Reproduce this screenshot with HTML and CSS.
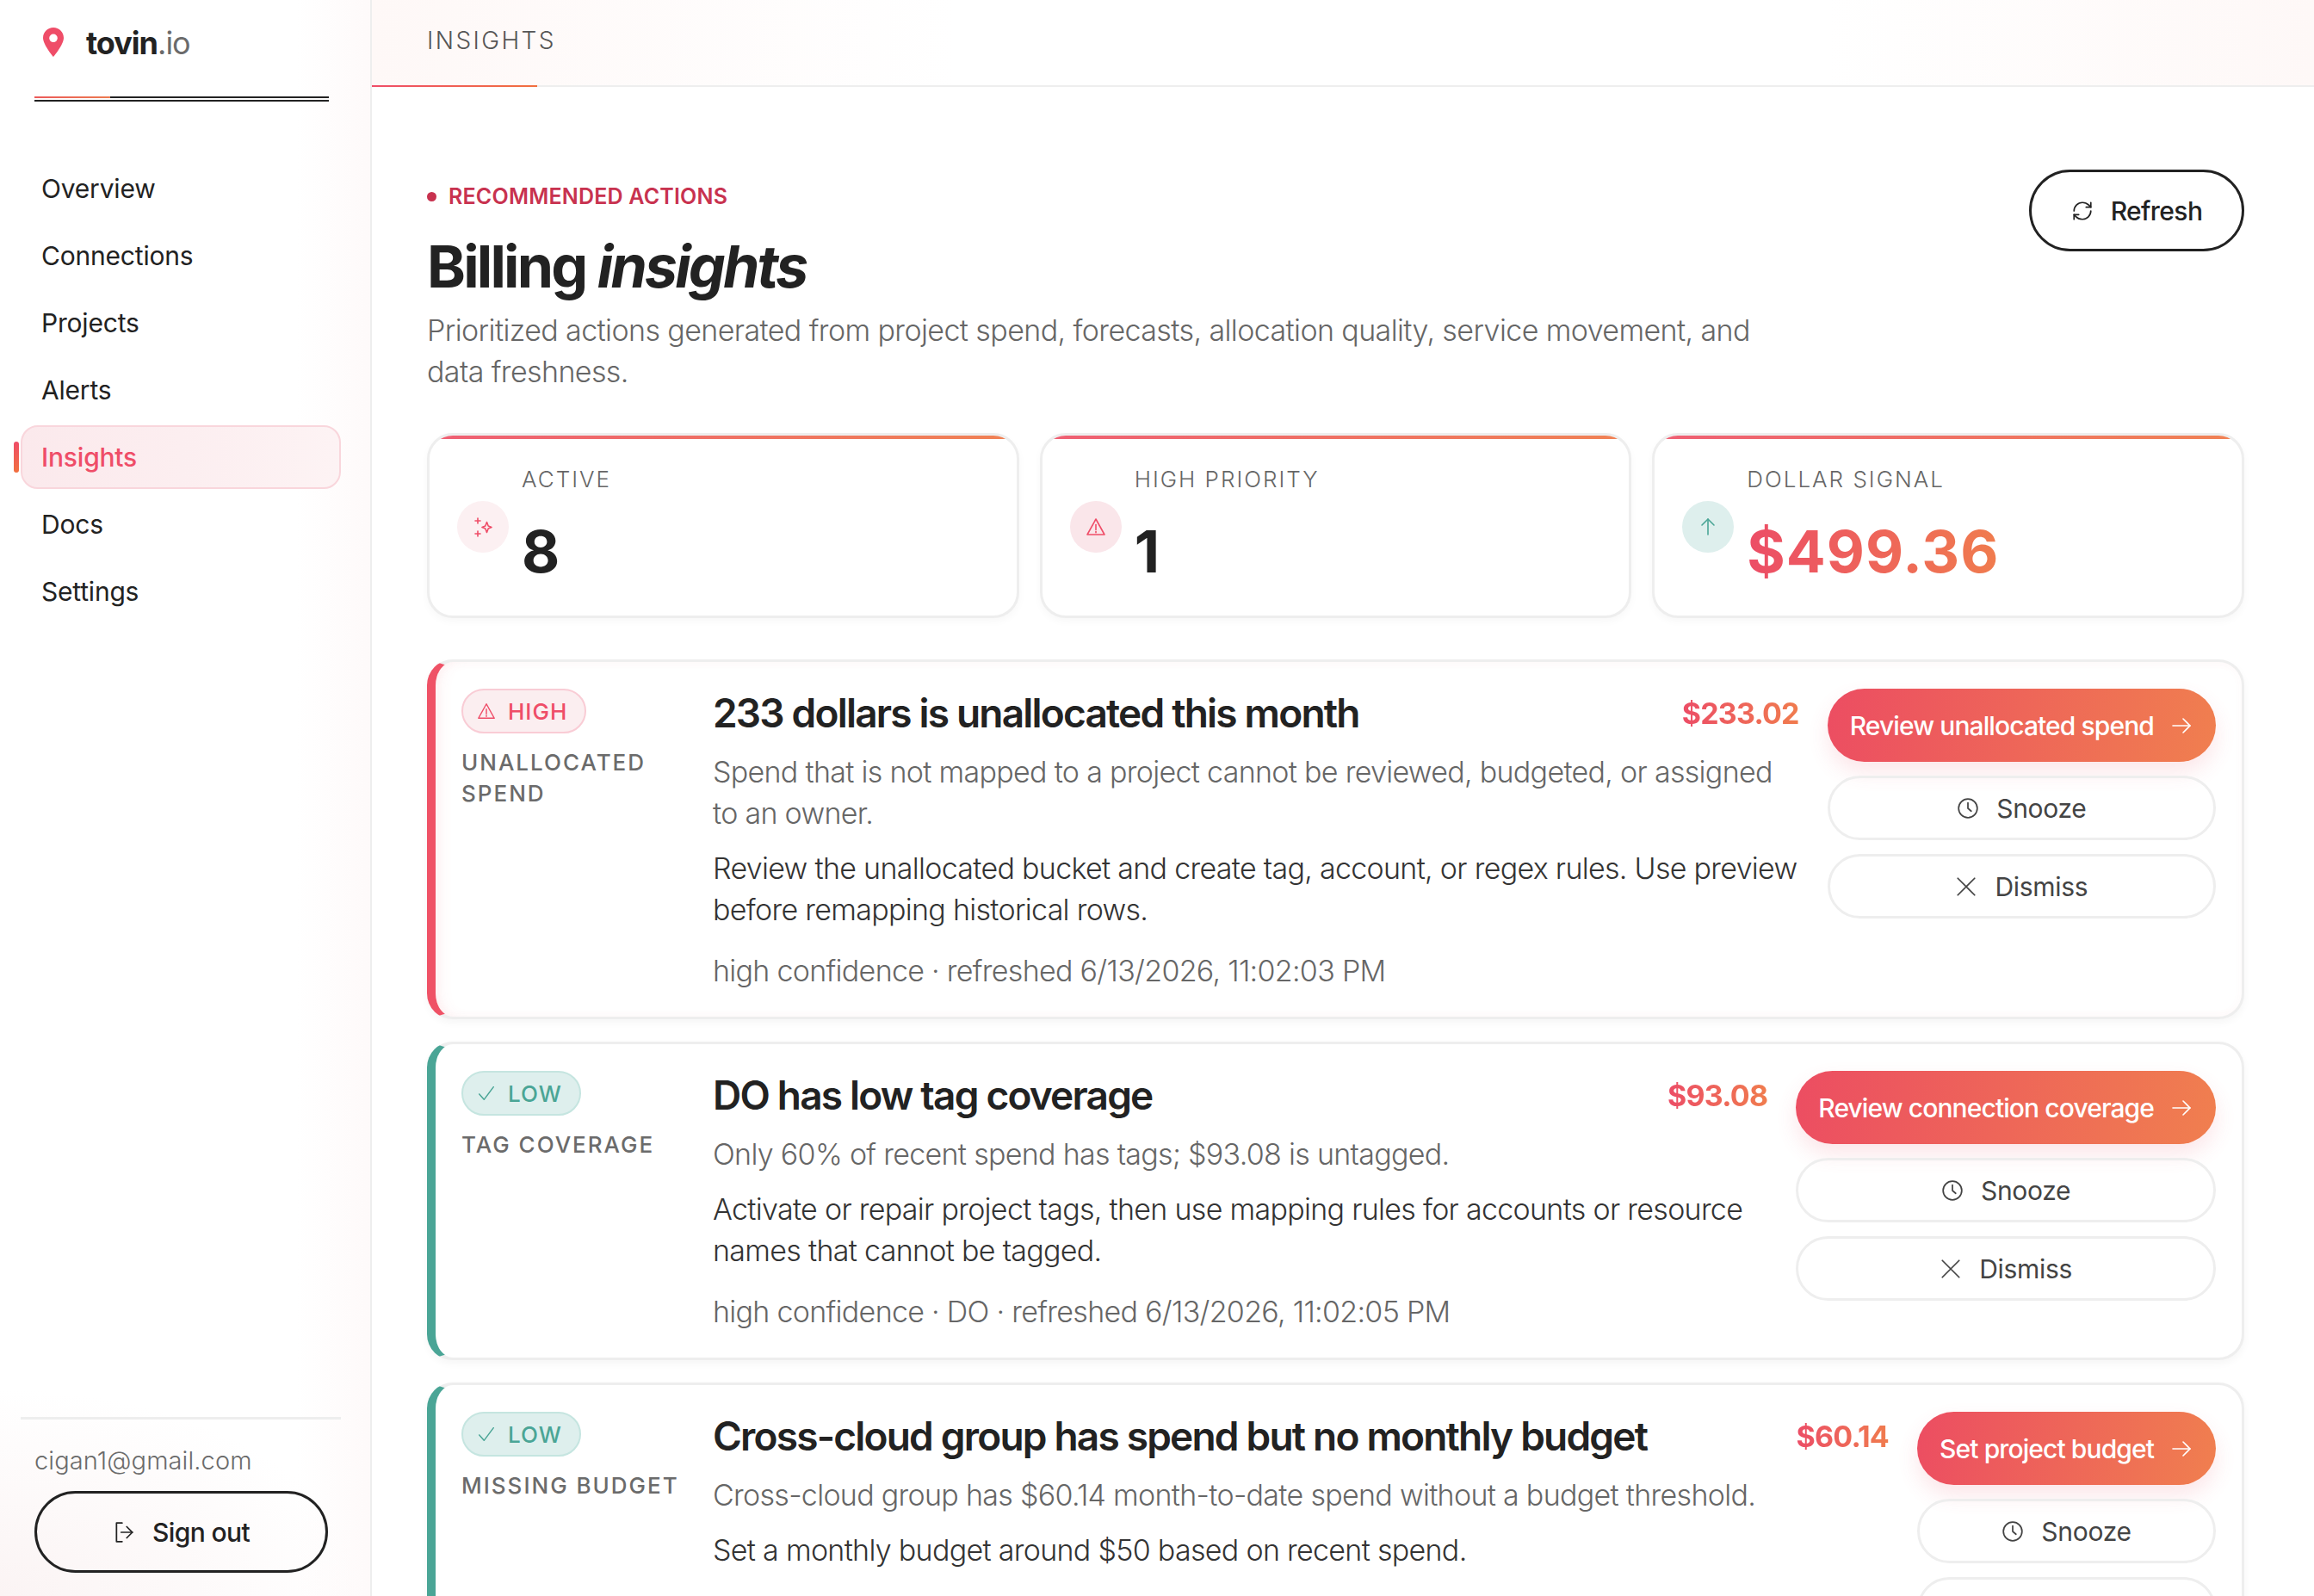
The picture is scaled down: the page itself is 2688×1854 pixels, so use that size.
FILE: index.html
```html
<!DOCTYPE html>
<html lang="en">
<head>
  <meta charset="UTF-8"/>
  <title>Billing insights</title>
  <link rel="stylesheet" href="styles.css">
</head>
<body>

  <!-- Icon sprite -->
  <svg class="sprite" xmlns="http://www.w3.org/2000/svg">
    <symbol id="i-alert" viewBox="0 0 24 24"><path d="M12 3 22 21H2Z"/><path d="M12 9.5v6"/><path d="M12 17.5v1.2"/></symbol>
    <symbol id="i-check" viewBox="0 0 24 24"><path d="m3 13 6 7L21 4"/></symbol>
    <symbol id="i-spark" viewBox="0 0 24 24"><path d="M16.5 6.5 18.2 11l3.8 1.5-3.8 1.5-1.7 4.5-1.7-4.5-3.8-1.5 3.800-1.500Z"/><path d="M6 2v6M3 5h6"/><path d="M6 17v6M3 20h6"/></symbol>
    <symbol id="i-up" viewBox="0 0 24 24"><path d="M12 21V3"/><path d="m5 10 7-7 7 7"/></symbol>
    <symbol id="i-refresh" viewBox="0 0 24 24"><path d="M3 12a9 9 0 0 1 9-9 9.750 9.750 0 0 1 6.740 2.740L21 8"/><path d="M21 3v5h-5"/><path d="M21 12a9 9 0 0 1-9 9 9.750 9.750 0 0 1-6.740-2.740L3 16"/><path d="M8 16H3v5"/></symbol>
    <symbol id="i-arrow" viewBox="0 0 24 24"><path d="M2 12h20"/><path d="m14 4 8 8-8 8"/></symbol>
    <symbol id="i-clock" viewBox="0 0 24 24"><circle cx="12" cy="12" r="10"/><path d="M12 6v6l3.500 3"/></symbol>
    <symbol id="i-x" viewBox="0 0 24 24"><path d="M3 3l18 18M21 3 3 21"/></symbol>
    <symbol id="i-out" viewBox="0 0 24 24"><path d="M10 2H4v20h6"/><path d="M9 12h12"/><path d="m15 6 6 6-6 6"/></symbol>
  </svg>

  <div class="app">

    <!-- Sidebar -->
    <aside class="sidebar">
      <div class="logo">
        <svg class="logo-pin" viewBox="0 0 24 34"><path fill-rule="evenodd" d="M12 0C5.400 0 0 5.300 0 12c0 8 12 22 12 22s12-14 12-22C24 5.300 18.600 0 12 0Zm0 7.500a4.800 4.800 0 1 1 0 9.600 4.800 4.800 0 0 1 0-9.600Z"/></svg>
        <div class="logo-text">tovin<span>.io</span></div>
      </div>
      <div class="logo-rule"></div>

      <nav class="nav">
        <div class="nav-item">Overview</div>
        <div class="nav-item">Connections</div>
        <div class="nav-item">Projects</div>
        <div class="nav-item">Alerts</div>
        <div class="nav-item active">Insights</div>
        <div class="nav-item">Docs</div>
        <div class="nav-item">Settings</div>
      </nav>

      <div class="side-footer">
        <div class="email">cigan1@gmail.com</div>
        <div class="btn btn-outline signout"><svg class="ico"><use href="#i-out"/></svg>Sign out</div>
      </div>
    </aside>

    <div class="content">
      <div class="topbar"><div class="tab">INSIGHTS</div></div>

      <main class="main">
        <div class="page-head">
          <div class="page-intro">
            <div class="eyebrow">RECOMMENDED ACTIONS</div>
            <h1>Billing <em>insights</em></h1>
            <p class="lead">Prioritized actions generated from project spend, forecasts, allocation quality, service movement, and data freshness.</p>
          </div>
          <div class="btn btn-outline refresh"><svg class="ico"><use href="#i-refresh"/></svg>Refresh</div>
        </div>

        <!-- Stat cards -->
        <div class="stats">
          <div class="stat">
            <div class="stat-icon pale"><svg class="ico"><use href="#i-spark"/></svg></div>
            <div>
              <div class="stat-label">ACTIVE</div>
              <div class="stat-value">8</div>
            </div>
          </div>
          <div class="stat">
            <div class="stat-icon pink"><svg class="ico"><use href="#i-alert"/></svg></div>
            <div>
              <div class="stat-label">HIGH PRIORITY</div>
              <div class="stat-value">1</div>
            </div>
          </div>
          <div class="stat">
            <div class="stat-icon teal"><svg class="ico"><use href="#i-up"/></svg></div>
            <div>
              <div class="stat-label">DOLLAR SIGNAL</div>
              <div class="stat-value grad-text">$499.36</div>
            </div>
          </div>
        </div>

        <!-- Insight cards -->
        <div class="insights">

          <div class="insight high">
            <div class="insight-side">
              <div class="badge"><svg class="ico"><use href="#i-alert"/></svg>HIGH</div>
              <div class="kind">UNALLOCATED<br>SPEND</div>
            </div>
            <div class="insight-body">
              <div class="title-row">
                <div class="insight-title">233 dollars is unallocated this month</div>
                <div class="amount"><span class="grad-text">$233.02</span></div>
              </div>
              <p class="desc">Spend that is not mapped to a project cannot be reviewed, budgeted, or assigned to an owner.</p>
              <p class="todo">Review the unallocated bucket and create tag, account, or regex rules. Use preview before remapping historical rows.</p>
              <p class="meta">high confidence · refreshed 6/13/2026, 11:02:03 PM</p>
            </div>
            <div class="actions">
              <div class="btn btn-primary">Review unallocated spend<svg class="ico"><use href="#i-arrow"/></svg></div>
              <div class="btn btn-quiet"><svg class="ico"><use href="#i-clock"/></svg>Snooze</div>
              <div class="btn btn-quiet"><svg class="ico"><use href="#i-x"/></svg>Dismiss</div>
            </div>
          </div>

          <div class="insight low">
            <div class="insight-side">
              <div class="badge"><svg class="ico"><use href="#i-check"/></svg>LOW</div>
              <div class="kind">TAG COVERAGE</div>
            </div>
            <div class="insight-body">
              <div class="title-row">
                <div class="insight-title">DO has low tag coverage</div>
                <div class="amount"><span class="grad-text">$93.08</span></div>
              </div>
              <p class="desc">Only 60% of recent spend has tags; $93.08 is untagged.</p>
              <p class="todo">Activate or repair project tags, then use mapping rules for accounts or resource names that cannot be tagged.</p>
              <p class="meta">high confidence · DO · refreshed 6/13/2026, 11:02:05 PM</p>
            </div>
            <div class="actions">
              <div class="btn btn-primary">Review connection coverage<svg class="ico"><use href="#i-arrow"/></svg></div>
              <div class="btn btn-quiet"><svg class="ico"><use href="#i-clock"/></svg>Snooze</div>
              <div class="btn btn-quiet"><svg class="ico"><use href="#i-x"/></svg>Dismiss</div>
            </div>
          </div>

          <div class="insight low">
            <div class="insight-side">
              <div class="badge"><svg class="ico"><use href="#i-check"/></svg>LOW</div>
              <div class="kind">MISSING BUDGET</div>
            </div>
            <div class="insight-body">
              <div class="title-row">
                <div class="insight-title">Cross-cloud group has spend but no monthly budget</div>
                <div class="amount"><span class="grad-text">$60.14</span></div>
              </div>
              <p class="desc">Cross-cloud group has $60.14 month-to-date spend without a budget threshold.</p>
              <p class="todo">Set a monthly budget around $50 based on recent spend.</p>
            </div>
            <div class="actions">
              <div class="btn btn-primary">Set project budget<svg class="ico"><use href="#i-arrow"/></svg></div>
              <div class="btn btn-quiet"><svg class="ico"><use href="#i-clock"/></svg>Snooze</div>
              <div class="btn btn-quiet"><svg class="ico"><use href="#i-x"/></svg>Dismiss</div>
            </div>
          </div>

        </div>
      </main>
    </div>
  </div>

</body>
</html>
```

FILE: styles.css
```css
* { box-sizing: border-box; }
html, body { margin: 0; height: 100%; }
body { font-family: Inter, "Noto Sans", sans-serif; color: #222; background: #fff; overflow: hidden; }
.sprite { display: none; }
.ico { fill: none; stroke: currentColor; stroke-width: 1.6; stroke-linecap: round; stroke-linejoin: round; flex: none; }

.app { display: flex; height: 1854px; overflow: hidden; }

/* Sidebar */
.sidebar {
  width: 432px;
  flex: none;
  display: flex;
  flex-direction: column;
  padding: 0 34px 27px 24px;
  border-right: 2px solid #eee;
  background:
    linear-gradient(90deg, rgba(255,255,255,0) 80%, rgba(252,240,240,.35) 100%),
    radial-gradient(ellipse 420px 240px at 0 100%, #fbf4f4 0%, rgba(255,255,255,0) 100%);
}
.logo { display: flex; align-items: center; gap: 26px; height: 112px; padding: 0 0 12px 26px; }
.logo-pin { width: 24px; height: 34px; fill: #ef4d68; flex: none; margin-top: -2px; }
.logo-text { font-size: 36px; font-weight: 700; letter-spacing: -1px; color: #222; }
.logo-text span { font-weight: 400; color: #6b6b6b; }
.logo-rule {
  height: 6px;
  margin: 0 0 0 16px;
  width: 342px;
  border-bottom: 2px solid #222;
  background: linear-gradient(90deg, #ec5a5a 0, #ec7a50 88px, #222 88px) top / 100% 2px no-repeat;
}

.nav { display: flex; flex-direction: column; gap: 4px; margin-top: 64px; }
.nav-item {
  position: relative;
  height: 74px;
  display: flex;
  align-items: center;
  padding-left: 24px;
  font-size: 30px;
  letter-spacing: -.2px;
  color: #222;
}
.nav-item.active {
  color: #ef4d68;
  font-weight: 500;
  border: 2px solid #f9d6dc;
  border-radius: 20px;
  padding-left: 22px;
  background: linear-gradient(90deg, #fbe9ec, #fdf3f4);
}
.nav-item.active::before {
  content: "";
  position: absolute;
  left: -10px;
  top: 17px;
  width: 6px;
  height: 36px;
  border-radius: 3px;
  background: linear-gradient(180deg, #ef4d68, #f1703f);
}
.side-footer { margin-top: auto; border-top: 3px solid #eee; padding: 31px 0 0 16px; }
.email { font-size: 29px; font-weight: 300; line-height: 34px; color: #6b6b6b; letter-spacing: .1px; }
.signout { width: 341px; margin-top: 18px; }

/* Buttons */
.btn { display: flex; align-items: center; justify-content: center; border-radius: 999px; white-space: nowrap; }
.btn-outline { height: 95px; gap: 20px; border: 3px solid #222; font-size: 30px; font-weight: 500; letter-spacing: -.6px; }
.btn-outline .ico { width: 26px; height: 26px; }
.refresh { width: 250px; flex: none; }
.btn-primary {
  height: 85px;
  gap: 20px;
  padding: 0 28px 0 26px;
  color: #fff;
  font-size: 30px;
  font-weight: 500;
  letter-spacing: -.9px;
  background: linear-gradient(100deg, #ec4d62, #f07f4f);
  box-shadow: 0 12px 24px rgba(236,77,98,.14);
}
.btn-primary .ico { width: 24px; height: 24px; }
.btn-quiet {
  height: 75px;
  gap: 20px;
  border: 3px solid #eee;
  color: #444;
  font-size: 30px;
  font-weight: 400;
  letter-spacing: -.3px;
}
.btn-quiet .ico { width: 26px; height: 26px; }

/* Main column */
.content { flex: 1; min-width: 0; display: flex; flex-direction: column; }
.topbar {
  position: relative;
  height: 101px;
  flex: none;
  display: flex;
  align-items: center;
  padding: 0 64px 6px;
  border-bottom: 2px solid #eee;
  background: linear-gradient(90deg, #fef8f7 0, #fff 30%, #fff 75%, #fef8f7 100%);
}
.topbar::after {
  content: "";
  position: absolute;
  left: 0;
  bottom: -2px;
  width: 192px;
  height: 2px;
  background: linear-gradient(90deg, #ef4d68, #f1703f);
}
.tab { font-size: 28px; font-weight: 300; letter-spacing: 2.4px; color: #555; }

.main { padding: 96px 81px 0 64px; }
.page-head { display: flex; justify-content: space-between; align-items: flex-start; }
.page-intro { padding-top: 14px; }
.eyebrow { display: flex; align-items: center; gap: 14px; font-size: 25px; line-height: 34px; font-weight: 600; letter-spacing: .2px; color: #c8324f; }
.eyebrow::before { content: ""; width: 11px; height: 11px; border-radius: 50%; background: #c8324f; }
h1 { margin: 24px 0 0; font-size: 68px; line-height: 80px; font-weight: 700; letter-spacing: -2.8px; color: #222; }
h1 em { font-style: italic; }
.lead { margin: 11px 0 0; max-width: 1580px; font-size: 34px; line-height: 48px; font-weight: 300; letter-spacing: -.6px; color: #666; }

.stats { display: grid; grid-template-columns: repeat(3, 1fr); gap: 24px; margin-top: 47px; }
.stat {
  position: relative;
  display: flex;
  align-items: center;
  gap: 15px;
  height: 215px;
  padding: 32px 32px 34px;
  border: 3px solid #eee;
  border-radius: 30px;
  background: #fff;
  box-shadow: 0 4px 10px rgba(0,0,0,.03);
  overflow: hidden;
}
.stat::before {
  content: "";
  position: absolute;
  left: 0;
  right: 0;
  top: 0;
  height: 4px;
  background: linear-gradient(90deg, #ef5f74, #f08254);
}
.stat-icon { width: 60px; height: 60px; border-radius: 50%; display: flex; align-items: center; justify-content: center; flex: none; margin-top: 4px; }
.stat-icon .ico { width: 24px; height: 24px; }
.stat-icon.pale { background: #fcf0f2; color: #ef4d68; }
.stat-icon.pink { background: #fae6ea; color: #ef4d68; }
.stat-icon.teal { background: #deefed; color: #4aa596; }
.stat-label { font-size: 26px; line-height: 34px; font-weight: 300; letter-spacing: 2px; color: #666; }
.stat-value { margin-top: 26px; font-size: 68px; line-height: 80px; font-weight: 700; letter-spacing: 1px; color: #222; }
.grad-text {
  background: linear-gradient(90deg, #ec4d66, #f07c4e);
  -webkit-background-clip: text;
  background-clip: text;
  color: transparent;
}

/* Insight cards */
.insights { display: flex; flex-direction: column; gap: 26px; margin-top: 48px; }
.insight {
  display: flex;
  padding: 31px 30px 29px 30px;
  border: 3px solid #eee;
  border-left-width: 10px;
  border-radius: 30px;
  background: #fff;
  box-shadow: 0 4px 10px rgba(0,0,0,.04);
}
.insight.high { border-left-color: #ef5266; box-shadow: 0 4px 10px rgba(0,0,0,.04), inset 10px 0 20px -10px rgba(239,82,102,.12), inset 0 0 12px rgba(239,82,102,.03); }
.insight.low { border-left-color: #4aa596; }
.insight-side { width: 292px; flex: none; }
.badge {
  display: inline-flex;
  align-items: center;
  gap: 14px;
  height: 52px;
  padding: 0 20px 0 16px;
  border-radius: 26px;
  font-size: 26px;
  font-weight: 500;
  letter-spacing: 1px;
}
.badge .ico { width: 22px; height: 22px; }
.high .badge { color: #ef4d68; background: #fbeef0; border: 2px solid #f9ccd5; }
.low .badge { color: #4aa596; background: #deefed; border: 2px solid #c5e5e0; }
.kind { margin-top: 16px; font-size: 26px; line-height: 36px; font-weight: 500; letter-spacing: 2px; color: #6b6b6b; }

.insight-body { flex: 1; min-width: 0; padding-right: 33px; }
.title-row { display: flex; justify-content: space-between; align-items: center; gap: 24px; }
.insight-title { font-size: 46px; line-height: 56px; font-weight: 600; letter-spacing: -1.8px; color: #222; }
.amount { font-size: 34px; font-weight: 700; letter-spacing: -.8px; white-space: nowrap; }
.desc, .todo, .meta { font-size: 34px; line-height: 48px; font-weight: 300; letter-spacing: -.7px; }
.desc { margin: 17px 0 0; color: #666; }
.todo { margin: 16px 0 0; color: #333; }
.meta { margin: 23px 0 0; color: #666; }
.actions { display: flex; flex-direction: column; gap: 16px; flex: none; }
```
